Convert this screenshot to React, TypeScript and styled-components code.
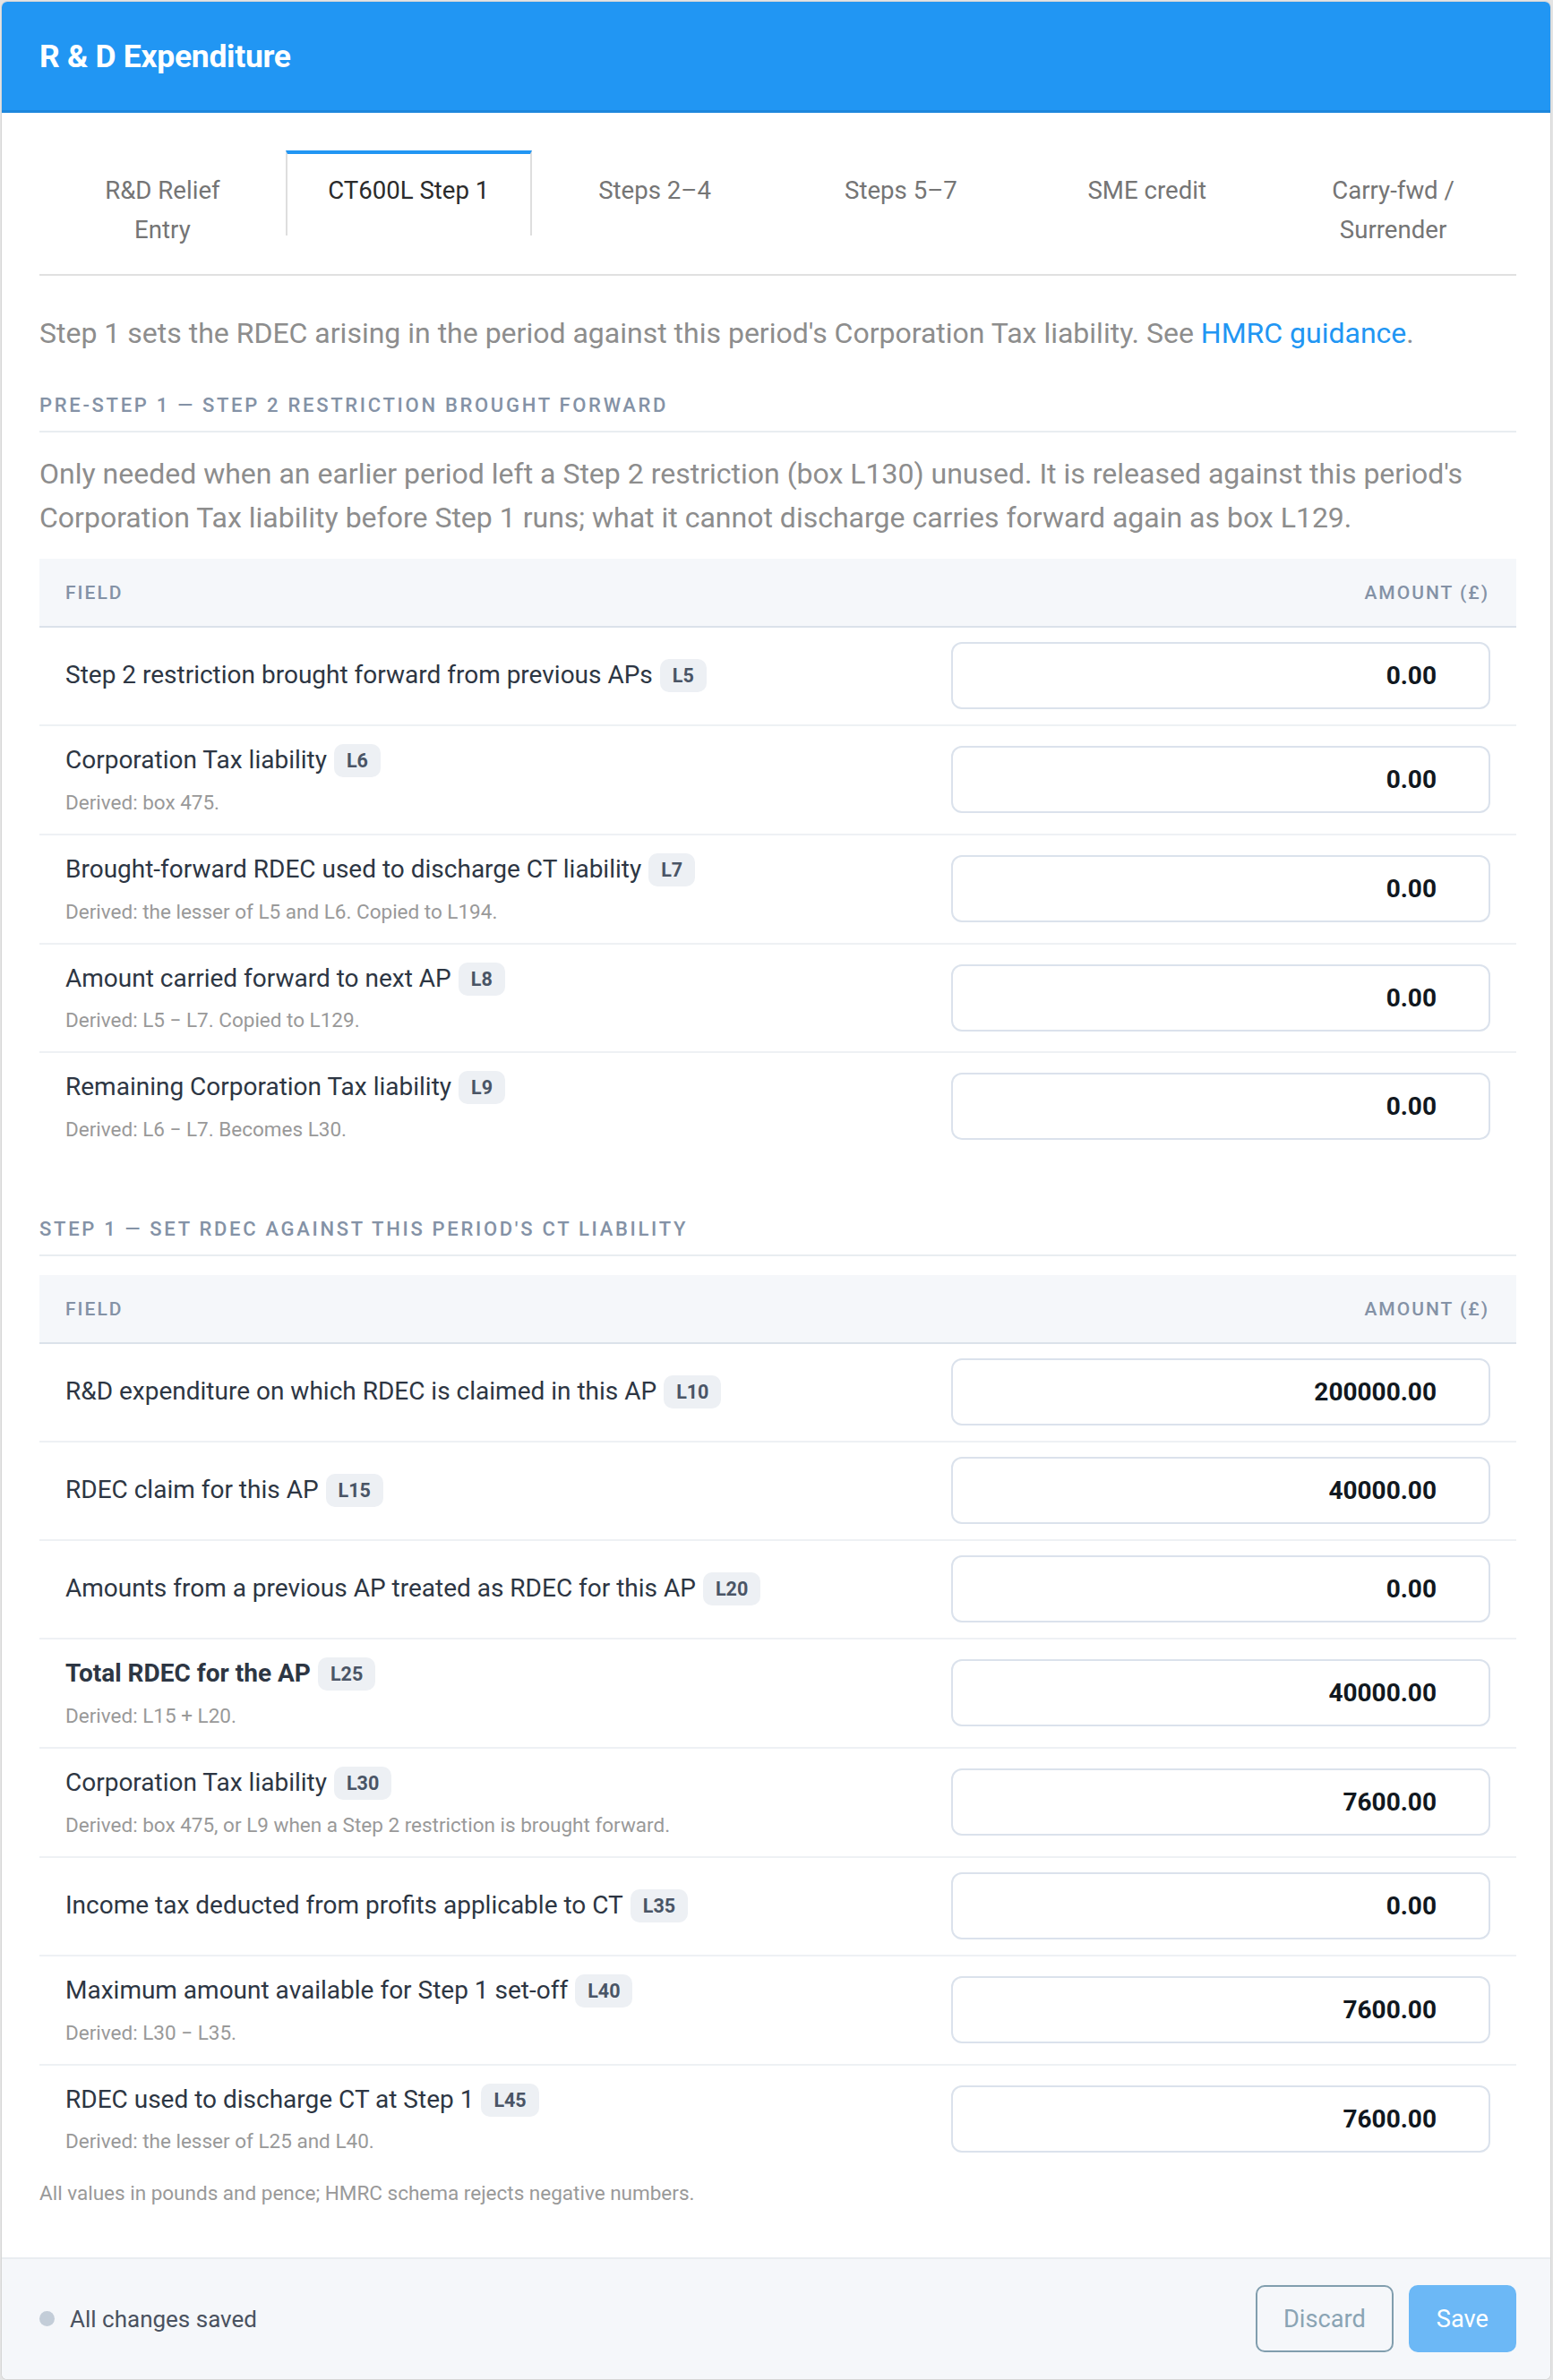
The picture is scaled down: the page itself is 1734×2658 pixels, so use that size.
import styled, { createGlobalStyle, css } from "styled-components";

const GlobalStyle = createGlobalStyle`
  * {
    box-sizing: border-box;
  }
  body {
    margin: 0;
    background: #e4e4e4;
    font-family: Roboto, "Liberation Sans", Arial, sans-serif;
  }
  #root {
    padding: 2px 3px 4px 2px;
  }
`;

const Card = styled.div`
  background: #fff;
  border-radius: 6px;
  overflow: hidden;
  box-shadow: 0 0 0 1px #d6d6d6;
`;

const Header = styled.header`
  height: 124px;
  background: #2196f3;
  border-bottom: 3px solid #1d87dd;
  display: flex;
  align-items: center;
  padding: 0 42px;
`;

const Title = styled.h1`
  margin: 0;
  color: #fff;
  font-size: 35.5px;
  font-weight: 700;
  letter-spacing: -0.3px;
`;

const Content = styled.div`
  padding: 42px 38px 54px 42px;
`;

const TabBar = styled.div`
  display: flex;
  align-items: flex-start;
  border-bottom: 2px solid #e0e0e0;
`;

const Tab = styled.div<{ $active?: boolean }>`
  flex: 1;
  text-align: center;
  white-space: pre-line;
  font-size: 27.6px;
  line-height: 1.58;
  padding: 19px 10px 28px;
  border-top: 4px solid transparent;
  border-left: 2px solid transparent;
  border-right: 2px solid transparent;
  color: #757575;
  ${(p) =>
    p.$active &&
    css`
      color: #2b2b2b;
      border-top-color: #2196f3;
      border-left-color: #dedede;
      border-right-color: #dedede;
    `}
`;

const Intro = styled.p`
  margin: 40px 0 0;
  font-size: 32px;
  line-height: 1.53;
  color: #8d8d8d;

  a {
    color: #2196f3;
    text-decoration: none;
  }
`;

const Section = styled.section<{ $gap: number }>`
  margin-top: ${(p) => p.$gap}px;
`;

const SectionTitle = styled.h2`
  margin: 0;
  padding-bottom: 12px;
  border-bottom: 2px solid #e9edf1;
  font-size: 22px;
  line-height: 33px;
  font-weight: 500;
  letter-spacing: 2.7px;
  text-transform: uppercase;
  color: #8492a6;
`;

const Note = styled.p`
  margin: 22px 0 0;
  font-size: 32px;
  line-height: 1.53;
  color: #8d8d8d;
`;

const Table = styled.table`
  width: 100%;
  margin-top: 21px;
  border-collapse: collapse;
`;

const HeadCell = styled.th<{ $right?: boolean }>`
  height: 76px;
  padding: 0 30px 0 29px;
  background: #f5f7fa;
  border-bottom: 2px solid #dbe2ea;
  text-align: ${(p) => (p.$right ? "right" : "left")};
  font-size: 21px;
  font-weight: 500;
  letter-spacing: 2px;
  color: #8492a6;
  ${(p) => p.$right && "width: 40%;"}
`;

const Row = styled.tr`
  border-bottom: 2px solid #eef1f4;
  &:last-child {
    border-bottom: none;
  }
`;

const Cell = styled.td`
  padding: 16px 29px 17px;
  vertical-align: middle;
`;

const Label = styled.div<{ $bold?: boolean }>`
  font-size: 28px;
  line-height: 1.6;
  color: #2d3643;
  font-weight: ${(p) => (p.$bold ? 700 : 400)};
`;

const Badge = styled.span`
  display: inline-block;
  margin-left: 8px;
  padding: 0 14px;
  height: 37px;
  line-height: 37px;
  border-radius: 10px;
  background: #edf0f4;
  color: #4a5566;
  font-size: 21.5px;
  font-weight: 700;
  vertical-align: 1px;
`;

const Derived = styled.div`
  margin-top: 6px;
  font-size: 22.5px;
  line-height: 1.6;
  color: #999;
`;

const AmountInput = styled.input`
  display: block;
  width: 100%;
  height: 75px;
  border: 2px solid #dbe2ec;
  border-radius: 12px;
  background: #fff;
  padding: 0 58px 0 20px;
  text-align: right;
  font-family: Roboto, "Liberation Sans", Arial, sans-serif;
  font-size: 28px;
  font-weight: 700;
  color: #111820;
  outline: none;
`;

const Footnote = styled.p`
  margin: 5px 0 0;
  font-size: 22.5px;
  line-height: 1.6;
  color: #999;
`;

const Footer = styled.footer`
  display: flex;
  align-items: center;
  justify-content: space-between;
  padding: 29px 38px 30px 42px;
  background: #f5f7fa;
  border-top: 2px solid #e9edf1;
`;

const Status = styled.div`
  display: flex;
  align-items: center;
  gap: 17px;
  font-size: 26px;
  color: #4a5260;
`;

const Dot = styled.span`
  width: 17px;
  height: 17px;
  border-radius: 50%;
  background: #c3cdd8;
`;

const Actions = styled.div`
  display: flex;
  gap: 17px;
`;

const Button = styled.button<{ $primary?: boolean }>`
  height: 75px;
  padding: 0 29px;
  border-radius: 10px;
  font-family: Roboto, "Liberation Sans", Arial, sans-serif;
  font-size: 27.2px;
  border: 2px solid ${(p) => (p.$primary ? "#6cb8f6" : "#819eae")};
  background: ${(p) => (p.$primary ? "#6cb8f6" : "transparent")};
  color: ${(p) => (p.$primary ? "#fff" : "#8aa4b4")};
`;

interface FieldRow {
  label: string;
  box: string;
  value: string;
  derived?: string;
  bold?: boolean;
}

const tabs = [
  "R&D Relief\nEntry",
  "CT600L Step 1",
  "Steps 2–4",
  "Steps 5–7",
  "SME credit",
  "Carry-fwd /\nSurrender",
];

const preStep: FieldRow[] = [
  { label: "Step 2 restriction brought forward from previous APs", box: "L5", value: "0.00" },
  { label: "Corporation Tax liability", box: "L6", value: "0.00", derived: "Derived: box 475." },
  {
    label: "Brought-forward RDEC used to discharge CT liability",
    box: "L7",
    value: "0.00",
    derived: "Derived: the lesser of L5 and L6. Copied to L194.",
  },
  {
    label: "Amount carried forward to next AP",
    box: "L8",
    value: "0.00",
    derived: "Derived: L5 − L7. Copied to L129.",
  },
  {
    label: "Remaining Corporation Tax liability",
    box: "L9",
    value: "0.00",
    derived: "Derived: L6 − L7. Becomes L30.",
  },
];

const stepOne: FieldRow[] = [
  { label: "R&D expenditure on which RDEC is claimed in this AP", box: "L10", value: "200000.00" },
  { label: "RDEC claim for this AP", box: "L15", value: "40000.00" },
  { label: "Amounts from a previous AP treated as RDEC for this AP", box: "L20", value: "0.00" },
  { label: "Total RDEC for the AP", box: "L25", value: "40000.00", derived: "Derived: L15 + L20.", bold: true },
  {
    label: "Corporation Tax liability",
    box: "L30",
    value: "7600.00",
    derived: "Derived: box 475, or L9 when a Step 2 restriction is brought forward.",
  },
  { label: "Income tax deducted from profits applicable to CT", box: "L35", value: "0.00" },
  {
    label: "Maximum amount available for Step 1 set-off",
    box: "L40",
    value: "7600.00",
    derived: "Derived: L30 − L35.",
  },
  {
    label: "RDEC used to discharge CT at Step 1",
    box: "L45",
    value: "7600.00",
    derived: "Derived: the lesser of L25 and L40.",
  },
];

function FieldTable({ rows }: { rows: FieldRow[] }) {
  return (
    <Table>
      <thead>
        <tr>
          <HeadCell>FIELD</HeadCell>
          <HeadCell $right>AMOUNT (£)</HeadCell>
        </tr>
      </thead>
      <tbody>
        {rows.map((row) => (
          <Row key={row.box}>
            <Cell>
              <Label $bold={row.bold}>
                {row.label}
                <Badge>{row.box}</Badge>
              </Label>
              {row.derived && <Derived>{row.derived}</Derived>}
            </Cell>
            <Cell>
              <AmountInput defaultValue={row.value} />
            </Cell>
          </Row>
        ))}
      </tbody>
    </Table>
  );
}

function App() {
  return (
    <>
      <GlobalStyle />
      <Card>
        <Header>
          <Title>R &amp; D Expenditure</Title>
        </Header>
        <Content>
          <TabBar>
            {tabs.map((t, i) => (
              <Tab key={t} $active={i === 1}>
                {t}
              </Tab>
            ))}
          </TabBar>
          <Intro>
            Step 1 sets the RDEC arising in the period against this period's Corporation Tax
            liability. See <a href="#">HMRC guidance</a>.
          </Intro>

          <Section $gap={39}>
            <SectionTitle>Pre-step 1 — Step 2 restriction brought forward</SectionTitle>
            <Note>
              Only needed when an earlier period left a Step 2 restriction (box L130) unused. It is
              released against this period's Corporation Tax liability before Step 1 runs; what it
              cannot discharge carries forward again as box L129.
            </Note>
            <FieldTable rows={preStep} />
          </Section>

          <Section $gap={60}>
            <SectionTitle>Step 1 — Set RDEC against this period's CT liability</SectionTitle>
            <FieldTable rows={stepOne} />
          </Section>

          <Footnote>All values in pounds and pence; HMRC schema rejects negative numbers.</Footnote>
        </Content>
        <Footer>
          <Status>
            <Dot />
            All changes saved
          </Status>
          <Actions>
            <Button>Discard</Button>
            <Button $primary>Save</Button>
          </Actions>
        </Footer>
      </Card>
    </>
  );
}

export default App;
